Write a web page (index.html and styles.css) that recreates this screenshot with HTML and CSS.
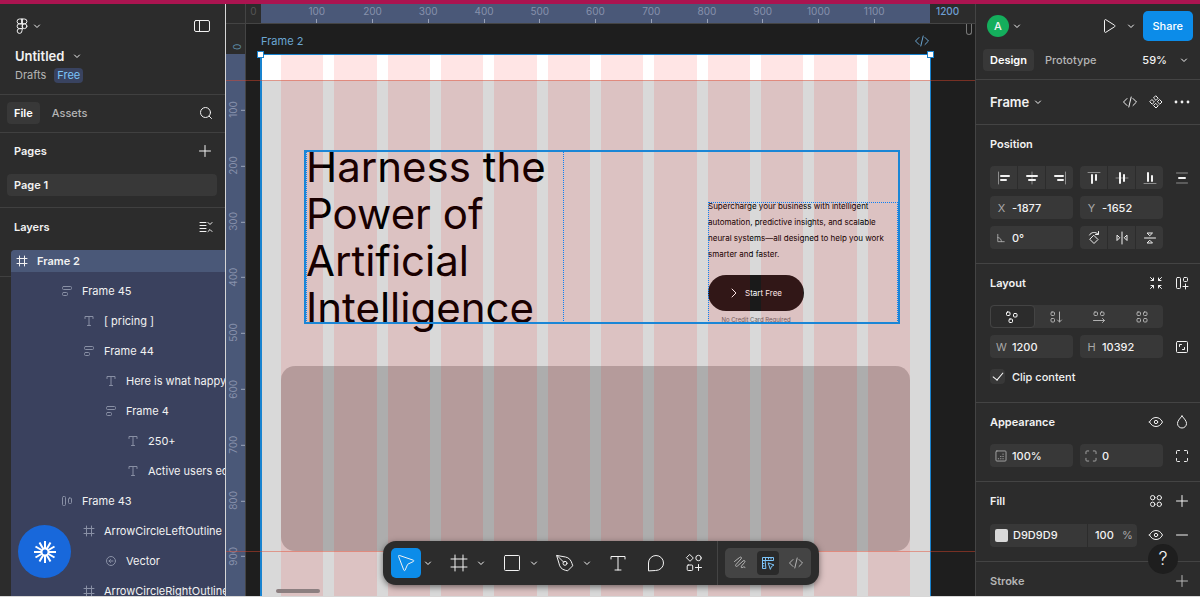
FILE: index.html
```html
<!DOCTYPE html>
<html lang="en">
<head>
    <meta charset="UTF-8">
    <meta name="viewport" content="width=device-width, initial-scale=1.0">
    <title>Untitled</title>
    <link rel="stylesheet" href="styles.css">
</head>
<body>
    <svg class="sprite" aria-hidden="true">
        <symbol id="chevron" viewBox="0 0 12 12"><path d="M3.5 5L6 7.5L8.5 5"/></symbol>
        <symbol id="plus" viewBox="0 0 24 24"><path d="M12 6.5v11M6.5 12h11"/></symbol>
        <symbol id="minus" viewBox="0 0 24 24"><path d="M6.5 12h11"/></symbol>
        <symbol id="code" viewBox="0 0 24 24"><path d="M9 8.5L5.5 12L9 15.5M15 8.5l3.5 3.5L15 15.5M13.2 7l-2.4 10"/></symbol>
        <symbol id="hash" viewBox="0 0 16 16"><path d="M5.5 3v10M10.5 3v10M3 5.5h10M3 10.5h10"/></symbol>
        <symbol id="text" viewBox="0 0 16 16"><path d="M4 5.5v-2h8v2M8 3.5v9M6.5 12.5h3"/></symbol>
        <symbol id="stack" viewBox="0 0 16 16"><rect x="3.5" y="3.5" width="9" height="3" rx="1"/><rect x="3.5" y="9.500" width="5" height="3" rx="1"/></symbol>
        <symbol id="row" viewBox="0 0 16 16"><rect x="3.5" y="3.5" width="3" height="9" rx="1"/><rect x="9.5" y="5" width="3" height="5.5" rx="1"/></symbol>
        <symbol id="vector" viewBox="0 0 16 16"><circle cx="8" cy="8" r="4.5"/><path d="M10 8H6M7.5 6.5L6 8l1.500 1.500"/></symbol>
        <symbol id="eye" viewBox="0 0 24 24"><path d="M5.5 12C7 9 9.300 7.500 12 7.500S17 9 18.500 12C17 15 14.700 16.500 12 16.500S7 15 5.500 12z"/><circle cx="12" cy="12" r="1.700"/></symbol>
        <symbol id="corners" viewBox="0 0 24 24"><path d="M6.500 9.500v-2a1 1 0 0 1 1-1h2M14.500 6.500h2a1 1 0 0 1 1 1v2M17.500 14.500v2a1 1 0 0 1-1 1h-2M9.500 17.500h-2a1 1 0 0 1-1-1v-2"/></symbol>
    </svg>

    <main class="app">
        <aside class="sidebar">
            <div class="file-head">
                <div class="bar">
                    <button class="menu" aria-label="Main menu">
                        <svg width="14" height="18" viewBox="0 0 14 18"><path d="M7 2H4.500a2.400 2.400 0 0 0 0 4.800H7zM7 2h2.500a2.400 2.400 0 0 1 0 4.800H7zM7 6.800H4.500a2.400 2.400 0 0 0 0 4.800H7zM7 11.600H4.500A2.400 2.400 0 1 0 7 14z"/><circle cx="9.500" cy="9.200" r="2.400"/></svg>
                        <svg class="chev"><use href="#chevron"/></svg>
                    </button>
                    <button class="icon-btn" aria-label="Toggle sidebar">
                        <svg viewBox="0 0 24 24"><rect x="4.500" y="6.500" width="15" height="11" rx="1.500"/><path d="M9.500 6.500v11"/></svg>
                    </button>
                </div>
                <button class="file-name">Untitled <svg class="chev"><use href="#chevron"/></svg></button>
                <div class="file-meta"><a href="#">Drafts</a><span class="badge">Free</span></div>
            </div>

            <div class="bar tabs">
                <button class="tab active">File</button>
                <button class="tab">Assets</button>
                <button class="icon-btn" aria-label="Search">
                    <svg viewBox="0 0 24 24"><circle cx="11.500" cy="11.500" r="5"/><path d="M15.200 15.200L17.500 17.500"/></svg>
                </button>
            </div>

            <div class="pages">
                <div class="bar">
                    <h2>Pages</h2>
                    <button class="icon-btn" aria-label="Add page"><svg><use href="#plus"/></svg></button>
                </div>
                <button class="page">Page 1</button>
            </div>

            <div class="layers">
                <div class="bar">
                    <h2>Layers</h2>
                    <button class="icon-btn" aria-label="Collapse layers">
                        <svg viewBox="0 0 24 24"><path d="M6 7.500h6M6 10.500h6M6 13.500h6M6 16.500h6M14 7.500l2 2 2-2M14 16.500l2-2 2 2"/></svg>
                    </button>
                </div>
                <ul class="layer-list">
                    <li class="root"><svg><use href="#hash"/></svg>Frame 2</li>
                    <li class="level-1"><svg><use href="#stack"/></svg>Frame 45</li>
                    <li class="level-2"><svg><use href="#text"/></svg>[ pricing ]</li>
                    <li class="level-2"><svg><use href="#stack"/></svg>Frame 44</li>
                    <li class="level-3"><svg><use href="#text"/></svg>Here is what happy</li>
                    <li class="level-3"><svg><use href="#stack"/></svg>Frame 4</li>
                    <li class="level-4"><svg><use href="#text"/></svg>250+</li>
                    <li class="level-4"><svg><use href="#text"/></svg>Active users ec</li>
                    <li class="level-1"><svg><use href="#row"/></svg>Frame 43</li>
                    <li class="level-2"><svg><use href="#hash"/></svg>ArrowCircleLeftOutline</li>
                    <li class="level-3"><svg><use href="#vector"/></svg>Vector</li>
                    <li class="level-2"><svg><use href="#hash"/></svg>ArrowCircleRightOutline</li>
                </ul>
            </div>

            <button class="launcher" aria-label="Open widget">
                <svg viewBox="0 0 24 24"><circle cx="12" cy="12" r="3.500"/><path d="M12 1v7M12 16v7M1 12h7M16 12h7M6.500 2.500L10 8.500M14 15.500l3.500 6M2.500 6.500L8.500 10M15.500 14l6 3.500M2.500 17.500L8.500 14M15.500 10l6-3.500M6.500 21.500l3.500-6M14 8.500l3.500-6"/></svg>
            </button>
        </aside>

        <section class="stage">
            <div class="corner"></div>
            <div class="ruler-x">
                <span class="origin">0</span>
                <div class="range">
                    <span>100</span><span>200</span><span>300</span><span>400</span><span>500</span><span>600</span><span>700</span><span>800</span><span>900</span><span>1000</span><span>1100</span>
                </div>
                <span class="end">1200</span>
            </div>
            <div class="ruler-y">
                <span class="origin">0</span>
                <div class="range">
                    <span>100</span><span>200</span><span>300</span><span>400</span><span>500</span><span>600</span><span>700</span><span>800</span><span>900</span><span></span>
                </div>
            </div>

            <div class="canvas">
                <div class="frame-label">Frame 2 <svg><use href="#code"/></svg></div>
                <div class="artboard">
                    <div class="artboard-body">
                        <div class="hero">
                            <div class="hero-title">
                                <h1>Harness the<br>Power of<br>Artificial<br>Intelligence</h1>
                            </div>
                            <div class="hero-side">
                                <p>Supercharge your business with intelligent<br>automation, predictive insights, and scalable<br>neural systems—all designed to help you work<br>smarter and faster.</p>
                                <button class="cta">
                                    <svg width="8" height="12" viewBox="0 0 8 12"><path d="M2 2l4 4-4 4"/></svg>
                                    Start Free
                                </button>
                                <small>No Credit Card Required</small>
                            </div>
                        </div>
                        <div class="placeholder"></div>
                    </div>
                    <div class="columns">
                        <i></i><i></i><i></i><i></i><i></i><i></i><i></i><i></i><i></i><i></i><i></i><i></i>
                    </div>
                    <b class="handle left"></b>
                    <b class="handle right"></b>
                </div>
            </div>

            <div class="guide top"></div>
            <div class="guide bottom"></div>
            <div class="scroll-x"></div>
            <div class="scroll-y"></div>

            <div class="toolbar">
                <button class="tool active" aria-label="Move"><svg viewBox="0 0 24 24"><path d="M4.500 5.200c-.2-.6.300-1 .8-.8l14 4.800c.7.200.7 1 .1 1.300l-5.400 2.600a1 1 0 0 0-.5.500l-2.400 5.600c-.3.600-1.100.6-1.300 0z"/></svg></button>
                <button class="more" aria-label="Move tools"><svg class="chev"><use href="#chevron"/></svg></button>
                <button class="tool" aria-label="Frame"><svg viewBox="0 0 24 24"><path d="M8 4v16M16 4v16M4 8h16M4 16h16"/></svg></button>
                <button class="more" aria-label="Region tools"><svg class="chev"><use href="#chevron"/></svg></button>
                <button class="tool" aria-label="Rectangle"><svg viewBox="0 0 24 24"><rect x="4.500" y="4.500" width="15" height="15" rx="1"/></svg></button>
                <button class="more" aria-label="Shape tools"><svg class="chev"><use href="#chevron"/></svg></button>
                <button class="tool" aria-label="Pen"><svg viewBox="0 0 24 24"><path d="M4 4.500l8.500 1.500c3.500.6 5.500 3.200 6.500 6.500l.7 2.300-5 5-2.300-.5C8.500 18.300 6.600 16 6 12.500zM4 4.500l6.700 6.700"/><circle cx="12" cy="12.300" r="2"/></svg></button>
                <button class="more" aria-label="Drawing tools"><svg class="chev"><use href="#chevron"/></svg></button>
                <button class="tool" aria-label="Text"><svg viewBox="0 0 24 24"><path d="M5 8V5.500h14V8M12 5.500v13.500M9 19h6"/></svg></button>
                <button class="tool" aria-label="Comment"><svg viewBox="0 0 24 24"><path d="M4.500 19.500V12a7.500 7.500 0 1 1 7.500 7.500z"/></svg></button>
                <button class="tool" aria-label="Actions"><svg viewBox="0 0 24 24"><path d="M8 3.700L11.300 7L8 10.300L4.700 7zM16.500 13.500v6M13.500 16.500h6"/><circle cx="16.500" cy="7" r="2.700"/><rect x="5.200" y="14" width="5.500" height="5.500" rx="1"/></svg></button>
                <div class="modes">
                    <button class="mode" aria-label="Draw"><svg viewBox="0 0 24 24"><path d="M6.500 10.500l5-4c1.500-1.200 2.700.2 1.500 1.500l-5 5.500c-1.200 1.400.2 2.600 1.600 1.400l5.400-4.900c1.400-1.200 2.700.1 1.500 1.500l-3 3.500c-1 1.300.2 2.400 1.400 1.300.9-.8 2-.7 2.100.4"/></svg></button>
                    <button class="mode active" aria-label="Design"><svg viewBox="0 0 24 24"><path d="M9.500 17.500h-3v-11h11v3h-8zM9.500 6.500v3h-3M12.500 6.500v1.500M15 6.500v1.500M6.500 12.500H8M6.500 15H8M12.500 12l5.500 2-2.500 1.500-1 2.500z"/></svg></button>
                    <button class="mode" aria-label="Dev Mode"><svg><use href="#code"/></svg></button>
                </div>
            </div>
        </section>

        <aside class="inspector">
            <header>
                <div class="bar account">
                    <button class="avatar" aria-label="Account">A</button>
                    <svg class="chev"><use href="#chevron"/></svg>
                    <button class="icon-btn play" aria-label="Present"><svg viewBox="0 0 24 24"><path d="M7.500 6.500c0-.8.700-1.200 1.300-.8l8.700 5.500c.6.400.6 1.200 0 1.600l-8.700 5.500c-.6.400-1.300 0-1.300-.8z"/></svg></button>
                    <svg class="chev"><use href="#chevron"/></svg>
                    <button class="share">Share</button>
                </div>
                <div class="bar">
                    <button class="tab active">Design</button>
                    <button class="tab">Prototype</button>
                    <button class="zoom">59% <svg class="chev"><use href="#chevron"/></svg></button>
                </div>
            </header>

            <div class="selection">
                <button class="kind">Frame <svg class="chev"><use href="#chevron"/></svg></button>
                <button class="icon-btn" aria-label="Dev view"><svg><use href="#code"/></svg></button>
                <button class="icon-btn" aria-label="Create component"><svg viewBox="0 0 24 24"><path d="M12 6l2.200 2.200L12 10.400L9.800 8.200zM12 13.600l2.200 2.200L12 18l-2.200-2.200zM8.200 9.800l2.200 2.200-2.200 2.200L6 12zM15.800 9.800L18 12l-2.200 2.200-2.200-2.200z"/></svg></button>
                <button class="icon-btn" aria-label="More"><svg class="solid" viewBox="0 0 24 24"><circle cx="6" cy="12" r="1.400"/><circle cx="12" cy="12" r="1.400"/><circle cx="18" cy="12" r="1.400"/></svg></button>
            </div>

            <section class="panel">
                <div class="panel-head"><h2>Position</h2></div>
                <div class="fields">
                    <div class="group">
                        <button aria-label="Align left"><svg viewBox="0 0 24 24"><path class="faint" d="M6.500 6v12"/><path class="thick" d="M9 10h8M9 14h5"/></svg></button>
                        <button aria-label="Align horizontal centers"><svg viewBox="0 0 24 24"><path class="faint" d="M12 6v12"/><path class="thick" d="M7 10h10M9 14h6"/></svg></button>
                        <button aria-label="Align right"><svg viewBox="0 0 24 24"><path class="faint" d="M17.500 6v12"/><path class="thick" d="M7 10h8M10 14h5"/></svg></button>
                    </div>
                    <div class="group">
                        <button aria-label="Align top"><svg viewBox="0 0 24 24"><path class="faint" d="M6 6.500h12"/><path class="thick" d="M10 9v8M14 9v5"/></svg></button>
                        <button aria-label="Align vertical centers"><svg viewBox="0 0 24 24"><path class="faint" d="M6 12h12"/><path class="thick" d="M10 7v10M14 9v6"/></svg></button>
                        <button aria-label="Align bottom"><svg viewBox="0 0 24 24"><path class="faint" d="M6 17.500h12"/><path class="thick" d="M10 7v8M14 10v5"/></svg></button>
                    </div>
                    <button class="icon-btn" aria-label="Distribute"><svg viewBox="0 0 24 24"><path class="faint" d="M6.500 7h11M6.500 17h11"/><path class="thick" d="M9 12h6"/></svg></button>

                    <label class="field"><span>X</span><input type="text" value="-1877"></label>
                    <label class="field"><span>Y</span><input type="text" value="-1652"></label>
                    <i></i>

                    <label class="field" aria-label="Rotation"><svg viewBox="0 0 24 24"><path d="M8.500 8v8h7M8.500 11.500c2.500 0 4 2 4 4.500"/></svg><input type="text" value="0°"></label>
                    <div class="group">
                        <button aria-label="Rotate 90"><svg viewBox="0 0 24 24"><path d="M12 9.500l4 4-4 4-4-4zM7.500 9c1.500-3 6-3.500 8.500-1M16.500 5.500v3h-3"/></svg></button>
                        <button aria-label="Flip horizontal"><svg viewBox="0 0 24 24"><path d="M12 6v12M7 9.500v5L9.500 12zM17 9.500v5L14.500 12z"/></svg></button>
                        <button aria-label="Flip vertical"><svg viewBox="0 0 24 24"><path d="M6.500 12h11M9.500 7h5L12 9.500zM9.500 17h5L12 14.500z"/></svg></button>
                    </div>
                </div>
            </section>

            <section class="panel">
                <div class="panel-head">
                    <h2>Layout</h2>
                    <button class="icon-btn" aria-label="Resize to fit"><svg viewBox="0 0 24 24"><path d="M6.500 6.500l3 3M9.500 7v2.500H7M17.500 6.500l-3 3M14.500 7v2.500H17M6.500 17.500l3-3M9.500 17v-2.500H7M17.500 17.500l-3-3M14.500 17v-2.500H17"/></svg></button>
                    <button class="icon-btn" aria-label="Add auto layout"><svg viewBox="0 0 24 24"><rect x="6.500" y="6.500" width="4" height="11" rx="1"/><rect x="13.500" y="6.500" width="4" height="4" rx="1"/><path d="M15.500 13v5M13 15.500h5"/></svg></button>
                </div>
                <div class="fields">
                    <div class="segmented">
                        <button class="active" aria-label="Freeform"><svg viewBox="0 0 24 24"><rect x="6.500" y="7" width="3.500" height="3.500" rx="1"/><rect x="13.500" y="8.500" width="3.500" height="3.500" rx="1"/><rect x="9" y="14" width="3.500" height="3.500" rx="1"/></svg></button>
                        <button aria-label="Vertical"><svg viewBox="0 0 24 24"><rect x="7" y="7" width="3.500" height="3.500" rx="1"/><rect x="7" y="13.500" width="3.500" height="3.500" rx="1"/><path d="M15.500 7v10M13.500 15l2 2 2-2"/></svg></button>
                        <button aria-label="Horizontal"><svg viewBox="0 0 24 24"><rect x="7" y="7" width="3.500" height="3.500" rx="1"/><rect x="13.500" y="7" width="3.500" height="3.500" rx="1"/><path d="M6.500 15.500h11M15.500 13.500l2 2-2 2"/></svg></button>
                        <button aria-label="Grid"><svg viewBox="0 0 24 24"><rect x="7" y="7" width="3.500" height="3.500" rx="1"/><rect x="13.500" y="7" width="3.500" height="3.500" rx="1"/><rect x="7" y="13.500" width="3.500" height="3.500" rx="1"/><rect x="13.500" y="13.500" width="3.500" height="3.500" rx="1"/></svg></button>
                    </div>
                    <i></i>
                    <label class="field"><span>W</span><input type="text" value="1200"></label>
                    <label class="field"><span>H</span><input type="text" value="10392"></label>
                    <button class="icon-btn" aria-label="Lock aspect ratio"><svg viewBox="0 0 24 24"><rect x="6.500" y="6.500" width="11" height="11" rx="1"/><path d="M9.500 11.500v-2h2M12.500 14.500h2v-2"/></svg></button>
                    <label class="check"><input type="checkbox" checked>Clip content</label>
                </div>
            </section>

            <section class="panel">
                <div class="panel-head">
                    <h2>Appearance</h2>
                    <button class="icon-btn" aria-label="Visibility"><svg><use href="#eye"/></svg></button>
                    <button class="icon-btn" aria-label="Blend mode"><svg viewBox="0 0 24 24"><path d="M12 6c2.500 3 4.500 5 4.500 7.500a4.500 4.500 0 0 1-9 0C7.500 11 9.500 9 12 6z"/></svg></button>
                </div>
                <div class="fields">
                    <label class="field" aria-label="Opacity"><svg viewBox="0 0 24 24"><rect x="6.500" y="6.500" width="11" height="11" rx="1"/><path d="M9 15h.5M11.500 15h.5M14 15h.5M11.500 12.500h.5M14 12.500h.5M14 10h.5"/></svg><input type="text" value="100%"></label>
                    <label class="field" aria-label="Corner radius"><svg><use href="#corners"/></svg><input type="text" value="0"></label>
                    <button class="icon-btn" aria-label="Individual corners"><svg><use href="#corners"/></svg></button>
                </div>
            </section>

            <section class="panel">
                <div class="panel-head">
                    <h2>Fill</h2>
                    <button class="icon-btn" aria-label="Styles"><svg viewBox="0 0 24 24"><circle cx="8.700" cy="8.700" r="2.200"/><circle cx="15.300" cy="8.700" r="2.200"/><circle cx="8.700" cy="15.300" r="2.200"/><circle cx="15.300" cy="15.300" r="2.200"/></svg></button>
                    <button class="icon-btn" aria-label="Add fill"><svg><use href="#plus"/></svg></button>
                </div>
                <div class="fill-row">
                    <div class="field fill">
                        <span class="swatch"></span>
                        <input type="text" value="D9D9D9" aria-label="Fill color">
                        <input class="percent" type="text" value="100" aria-label="Fill opacity">
                        <span>%</span>
                    </div>
                    <button class="icon-btn" aria-label="Hide fill"><svg><use href="#eye"/></svg></button>
                    <button class="icon-btn" aria-label="Remove fill"><svg><use href="#minus"/></svg></button>
                </div>
            </section>

            <section class="panel muted">
                <div class="panel-head">
                    <h2>Stroke</h2>
                    <button class="icon-btn" aria-label="Add stroke"><svg><use href="#plus"/></svg></button>
                </div>
            </section>

            <button class="help" aria-label="Help">?</button>
        </aside>
    </main>
</body>
</html>
```
FILE: styles.css
```css
* {
    box-sizing: border-box;
}

body {
    margin: 0;
    height: 100vh;
    display: flex;
    flex-direction: column;
    overflow: hidden;
    border-top: 4px solid #ab1450;
    border-bottom: 1px solid #d8d8d8;
    background: #2c2c2c;
    color: #f2f2f2;
    font-family: Inter, "Liberation Sans", sans-serif;
    font-size: 11px;
    line-height: 16px;
}

button,
input {
    padding: 0;
    border: none;
    background: none;
    color: inherit;
    font: inherit;
}

h1,
h2,
p,
ul {
    margin: 0;
    padding: 0;
}

h2 {
    flex: 1;
    font-size: 11px;
    font-weight: 600;
}

a {
    color: inherit;
    text-decoration: none;
}

svg {
    flex: none;
    width: 24px;
    height: 24px;
    fill: none;
    stroke: currentColor;
    stroke-linecap: round;
    stroke-linejoin: round;
}

svg.chev {
    width: 12px;
    height: 12px;
}

svg.solid {
    fill: currentColor;
    stroke: none;
}

.sprite {
    display: none;
}

.app {
    flex: 1;
    min-height: 0;
    display: flex;
}

.bar {
    display: flex;
    align-items: center;
}

.icon-btn {
    display: flex;
    width: 24px;
    height: 24px;
}

.tab {
    height: 22px;
    padding: 0 7px;
    border-radius: 4px;
    color: #b5b5b5;
    font-weight: 500;
}

.tab.active {
    background: #383838;
    color: #fff;
    font-weight: 600;
}

/* Left sidebar */

.sidebar {
    position: relative;
    flex: none;
    width: 226px;
    display: flex;
    flex-direction: column;
    overflow: hidden;
    border-right: 1px solid #d6d6d6;
}

.file-head {
    height: 91px;
    padding: 10px 11px 0 15px;
    border-bottom: 1px solid #404040;
}

.file-head .bar {
    justify-content: space-between;
}

.menu {
    display: flex;
    align-items: center;
    gap: 2px;
}

.menu svg:first-child {
    width: 14px;
    height: 18px;
}

.file-name {
    display: flex;
    align-items: center;
    gap: 7px;
    margin-top: 8px;
    height: 20px;
    font-size: 13px;
    font-weight: 600;
}

.file-meta {
    display: flex;
    align-items: center;
    gap: 8px;
    height: 18px;
    color: #b5b5b5;
}

.badge {
    padding: 0 3px;
    border-radius: 4px;
    background: #394360;
    color: #7cc4f8;
    line-height: 15px;
}

.tabs {
    height: 38px;
    padding: 0 7px 1px;
    gap: 5px;
    border-bottom: 1px solid #404040;
}

.tabs .icon-btn {
    margin-left: auto;
}

.pages {
    height: 75px;
    padding: 6px 8px 0 7px;
    border-bottom: 1px solid #404040;
}

.pages .bar {
    padding-left: 7px;
}

.page {
    width: 100%;
    height: 22px;
    margin-top: 11px;
    padding-left: 7px;
    border-radius: 4px;
    background: #383838;
    font-weight: 600;
    text-align: left;
}

.layers {
    position: relative;
    flex: 1;
    min-height: 0;
    padding-top: 7px;
}

.layers::before {
    content: '';
    position: absolute;
    top: 68px;
    left: 0;
    width: 11px;
    height: 1px;
    background: #404040;
}

.layers .bar {
    padding: 0 7px 0 14px;
}

.layer-list {
    margin: 11px 0 0 11px;
    overflow: hidden;
    list-style: none;
    border-radius: 4px 0 0 0;
    background: #3a415e;
}

.layer-list li {
    display: flex;
    align-items: center;
    gap: 7px;
    height: 30px;
    white-space: nowrap;
}

.layer-list svg {
    width: 16px;
    height: 16px;
    color: #8990a5;
}

.layer-list .root {
    height: 22px;
    margin-bottom: 4px;
    padding-left: 3px;
    background: #4a5878;
    font-weight: 600;
}

.layer-list .root svg {
    color: #f2f2f2;
}

.level-1 { padding-left: 48px; }
.level-2 { padding-left: 70px; }
.level-3 { padding-left: 92px; }
.level-4 { padding-left: 114px; }

.launcher {
    position: absolute;
    left: 18px;
    bottom: 18px;
    display: flex;
    align-items: center;
    justify-content: center;
    width: 53px;
    height: 53px;
    border-radius: 50%;
    background: #1868db;
    color: #fff;
}

.launcher svg {
    stroke-width: 2;
    stroke-linecap: butt;
}

/* Rulers */

.stage {
    position: relative;
    flex: 1;
    min-width: 0;
    display: grid;
    grid-template-columns: 20px minmax(0, 1fr);
    grid-template-rows: 20px minmax(0, 1fr);
    overflow: hidden;
    background: #1e1e1e;
    font-size: 10px;
}

.corner {
    border-right: 1px solid #444;
    border-bottom: 1px solid #444;
    background: #2c2c2c;
}

.ruler-x,
.ruler-y {
    display: flex;
    background: #2c2c2c;
    color: #8791ac;
    line-height: 14px;
}

.ruler-x {
    border-bottom: 1px solid #444;
}

.ruler-x .origin {
    width: 15px;
    color: #555;
    text-align: center;
}

.range {
    display: flex;
    background: #4a5878;
}

.ruler-x .range {
    flex: 1;
}

.range::before,
.range::after {
    content: '';
    flex: 1;
}

.range span {
    flex: 2;
    display: flex;
    flex-direction: column;
    align-items: center;
    justify-content: space-between;
}

.range span::after {
    content: '';
    width: 1px;
    height: 4px;
    background: #9aa3b8;
}

.ruler-x .range span {
    width: 0;
}

.ruler-x .end {
    width: 45px;
    padding-left: 6px;
    color: #6f9fd4;
    font-weight: 500;
}

.ruler-y {
    flex-direction: column;
    overflow: hidden;
    border-right: 1px solid #444;
}

.ruler-y .origin {
    flex: none;
    height: 30px;
    padding-right: 4px;
    padding-top: 4px;
    color: #5b87a0;
}

.ruler-y span {
    writing-mode: vertical-rl;
    transform: rotate(180deg);
}

.ruler-y .range {
    flex: none;
    flex-direction: column;
    height: 614px;
}

.ruler-y .range span {
    height: 0;
}

.ruler-y .range span::after {
    width: 4px;
    height: 1px;
}

/* Canvas */

.canvas {
    display: flex;
    flex-direction: column;
    min-height: 0;
    padding: 0 45px 0 15px;
}

.frame-label {
    display: flex;
    justify-content: space-between;
    align-items: center;
    flex: none;
    height: 30px;
    padding-top: 4px;
    color: #6ba6d2;
    font-size: 11px;
}

.frame-label svg {
    width: 24px;
    height: 24px;
    margin-right: -4px;
}

.artboard {
    position: relative;
    flex: 1;
    min-height: 0;
    padding-top: 26px;
    background: #fff;
    color: #000;
}

.artboard::after {
    content: '';
    position: absolute;
    inset: 0 -1px -4px -1px;
    border: 2px solid #1983cf;
    border-width: 1px 1px 1px 2px;
}

.artboard-body {
    height: 100%;
    padding-top: 70px;
    overflow: hidden;
    background: #d9d9d9;
}

.columns {
    position: absolute;
    inset: 0;
    display: grid;
    grid-template-columns: repeat(12, 1fr);
    gap: 11px;
    padding: 0 20px;
}

.columns i {
    background: rgba(255, 0, 0, 0.1);
}

.hero {
    position: relative;
    display: flex;
    justify-content: space-between;
    align-items: flex-end;
    margin: 0 30px 0 43px;
    padding: 1px 2px;
}

.hero::after,
.hero-title::after,
.hero-side::after {
    content: '';
    position: absolute;
    inset: 0;
    z-index: 1;
    border: 1px dotted #0a80f5;
}

.hero::after {
    border: 2px solid #1a86d6;
}

.hero-title,
.hero-side {
    position: relative;
    height: 172px;
}

.hero-title {
    width: 258px;
}

.hero h1 {
    margin: -8px 0;
    font-size: 42px;
    font-weight: 400;
    line-height: 47px;
    white-space: nowrap;
}

.hero-side {
    display: flex;
    flex-direction: column;
    width: 190px;
    height: 121px;
}

.hero-side p {
    margin-top: -4px;
    font-size: 8px;
    line-height: 16px;
    white-space: nowrap;
}

.cta {
    display: flex;
    align-items: center;
    justify-content: center;
    gap: 7px;
    flex: none;
    width: 96px;
    height: 36px;
    margin: 13px 0 5px;
    border-radius: 18px;
    background: #1a1a1a;
    color: #fff;
    font-size: 8px;
}

.cta svg {
    width: 8px;
    height: 12px;
}

.hero-side small {
    width: 96px;
    color: #666;
    font-size: 6px;
    line-height: 8px;
    text-align: center;
}

.placeholder {
    height: 185px;
    margin: 42px 20px 0;
    border-radius: 14px;
    background: rgba(0, 0, 0, 0.2);
}

.handle {
    position: absolute;
    top: -3px;
    z-index: 1;
    width: 7px;
    height: 7px;
    border: 1px solid #1983cf;
    background: #fff;
}

.handle.left { left: -4px; }
.handle.right { right: -4px; }

.guide {
    position: absolute;
    left: 0;
    right: 0;
    height: 1px;
    background: rgba(228, 72, 44, 0.45);
}

.guide.top { top: 76px; }
.guide.bottom { top: 547px; }

.scroll-x {
    position: absolute;
    left: 50px;
    bottom: 3px;
    width: 44px;
    height: 4px;
    border-radius: 2px;
    background: #8c7f80;
}

.scroll-y {
    position: absolute;
    top: 20px;
    right: 3px;
    width: 6px;
    height: 11px;
    border: 1px solid #777;
    border-top: none;
    border-radius: 0 0 3px 3px;
}

/* Bottom toolbar */

.toolbar {
    position: absolute;
    left: 0;
    right: 0;
    bottom: 11px;
    display: flex;
    align-items: center;
    width: fit-content;
    height: 44px;
    margin: 0 auto;
    padding: 0 8px;
    border-radius: 13px;
    background: #2c2c2c;
    color: #f2f2f2;
    box-shadow: 0 2px 6px rgba(0, 0, 0, 0.5);
}

.tool,
.more,
.mode {
    display: flex;
    align-items: center;
    justify-content: center;
}

.tool {
    width: 30px;
    height: 30px;
    border-radius: 5px;
}

.tool.active {
    background: #0c8ce9;
}

.tool + .tool,
.more + .tool {
    margin-left: 8px;
}

.more {
    width: 15px;
    height: 30px;
}

.modes {
    position: relative;
    display: flex;
    align-items: center;
    gap: 6px;
    height: 30px;
    margin-left: 16px;
    padding: 0 4px;
    border-radius: 5px;
    background: #444;
    color: #b5b5b5;
}

.modes::before {
    content: '';
    position: absolute;
    left: -8px;
    top: -7px;
    width: 1px;
    height: 44px;
    background: #444;
}

.mode {
    width: 22px;
    height: 24px;
    border-radius: 4px;
}

.mode.active {
    background: #2a2a2a;
    color: #7cc4f8;
}

/* Right inspector */

.inspector {
    position: relative;
    flex: none;
    width: 225px;
    overflow: hidden;
    border-left: 1px solid #444;
}

.inspector header {
    height: 76px;
    padding: 7px 7px 0;
    border-bottom: 1px solid #444;
}

.account {
    height: 30px;
    margin-bottom: 8px;
    padding-left: 4px;
}

.avatar {
    width: 22px;
    height: 22px;
    margin-right: 2px;
    border-radius: 50%;
    background: #14ae5c;
    font-weight: 500;
}

.play {
    margin: 0 4px 0 auto;
}

.share {
    height: 30px;
    margin-left: 6px;
    padding: 0 10px;
    border-radius: 5px;
    background: #0c8ce9;
    color: #fff;
    font-weight: 500;
}

.inspector header .tab + .tab {
    margin-left: 4px;
}

.zoom {
    display: flex;
    align-items: center;
    gap: 11px;
    margin-left: auto;
    padding-right: 3px;
    font-weight: 500;
}

.selection {
    display: flex;
    align-items: center;
    gap: 2px;
    height: 45px;
    padding: 0 6px 0 14px;
    border-bottom: 1px solid #444;
}

.kind {
    display: flex;
    align-items: center;
    gap: 3px;
    margin-right: auto;
    font-size: 13px;
    font-weight: 600;
}

.panel {
    padding: 7px 6px 14px 14px;
    border-bottom: 1px solid #444;
}

.panel-head {
    display: flex;
    align-items: center;
    gap: 2px;
    height: 24px;
    margin-bottom: 10px;
}

.panel.muted {
    color: #b5b5b5;
}

.fields {
    display: grid;
    grid-template-columns: 1fr 1fr 24px;
    grid-auto-rows: 23px;
    gap: 7px;
}

.field {
    display: flex;
    align-items: center;
    min-width: 0;
    border-radius: 4px;
    background: #383838;
    color: #a8a8a8;
}

.field > span:first-child {
    width: 22px;
    padding-left: 1px;
    text-align: center;
}

.field input {
    width: 0;
    flex: 1;
    min-width: 0;
    color: #f2f2f2;
    font-weight: 500;
}

.field svg {
    width: 22px;
    height: 22px;
}

.group,
.segmented {
    display: flex;
    border-radius: 4px;
    background: #383838;
}

.group {
    gap: 1px;
    overflow: hidden;
    background: #2c2c2c;
}

.group button,
.segmented button {
    flex: 1;
    display: flex;
    align-items: center;
    justify-content: center;
    min-width: 0;
}

.group button {
    background: #383838;
}

.faint {
    stroke: #8c8c8c;
}

.thick {
    stroke-width: 2;
}

.segmented {
    grid-column: span 2;
    color: #b0b0b0;
}

.segmented .active {
    border: 1px solid #444;
    border-radius: 4px;
    background: #2c2c2c;
    color: #fff;
}

.check {
    grid-column: span 3;
    display: flex;
    align-items: center;
    gap: 7px;
    font-weight: 500;
}

.check input {
    appearance: none;
    display: flex;
    align-items: center;
    justify-content: center;
    width: 15px;
    height: 15px;
    margin: 0;
    border-radius: 4px;
    background: #383838;
}

.check input:checked::before {
    content: '';
    width: 9px;
    height: 5px;
    margin-top: -3px;
    border: 1px solid #fff;
    border-width: 0 0 1px 1px;
    transform: rotate(-50deg);
}

.fill-row {
    display: flex;
    align-items: center;
    gap: 2px;
}

.fill {
    flex: 1;
    height: 23px;
    margin-right: 5px;
}

.field > .swatch:first-child {
    flex: none;
    width: 13px;
    height: 13px;
    margin: 0 5px;
    border-radius: 2px;
    background: #d9d9d9;
}

.field .percent {
    flex: none;
    width: 35px;
    height: 23px;
    padding-left: 7px;
    border-left: 1px solid #2c2c2c;
}

.fill span:last-child {
    width: 15px;
}

.help {
    position: absolute;
    right: 22px;
    bottom: 22px;
    width: 30px;
    height: 30px;
    border-radius: 50%;
    background: #1e1e1e;
    font-size: 18px;
    font-weight: 300;
}
```
